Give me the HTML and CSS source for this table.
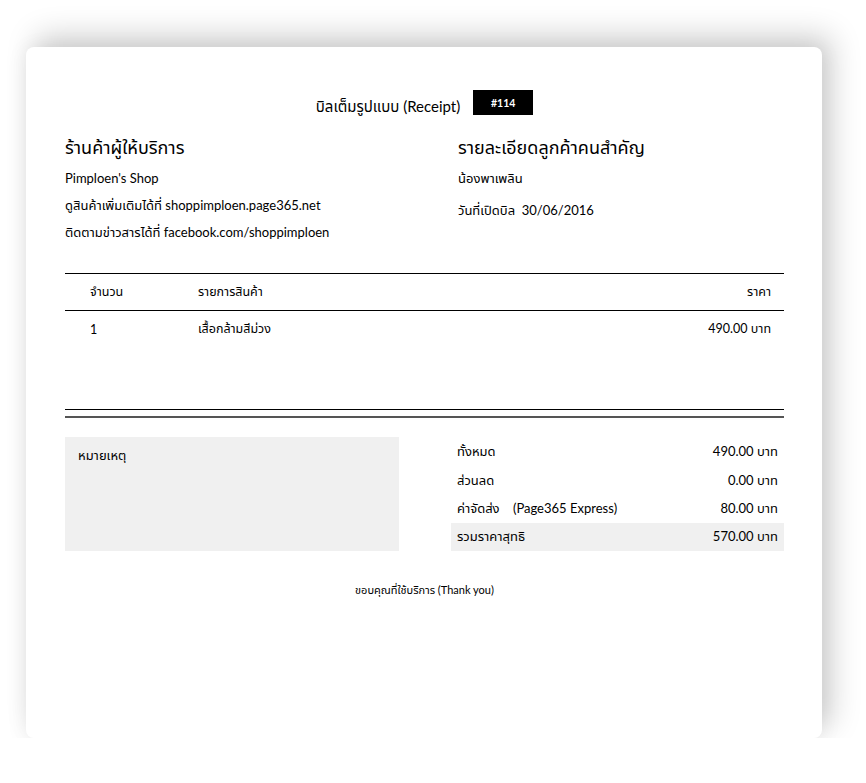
FILE: index.html
```html
<!DOCTYPE html>
<html lang="th">
<head>
<meta charset="utf-8">
<title>Receipt</title>
<link rel="stylesheet" href="styles.css">
</head>
<body>
<div class="card">
  <div class="title-row">
    <span class="title">บิลเต็มรูปแบบ (Receipt)</span>
    <span class="badge">#114</span>
  </div>

  <div class="info">
    <div class="col">
      <h2 class="heading">ร้านค้าผู้ให้บริการ</h2>
      <div class="line">Pimploen's Shop</div>
      <div class="line">ดูสินค้าเพิ่มเติมได้ที่ shoppimploen.page365.net</div>
      <div class="line">ติดตามข่าวสารได้ที่ facebook.com/shoppimploen</div>
    </div>
    <div class="col">
      <h2 class="heading">รายละเอียดลูกค้าคนสำคัญ</h2>
      <div class="line">น้องพาเพลิน</div>
      <div class="line date">วันที่เปิดบิล&nbsp; 30/06/2016</div>
    </div>
  </div>

  <div class="items">
    <div class="items-head">
      <span class="c-qty">จำนวน</span>
      <span class="c-name">รายการสินค้า</span>
      <span class="c-price">ราคา</span>
    </div>
    <div class="items-body">
      <div class="item-row">
        <span class="c-qty">1</span>
        <span class="c-name">เสื้อกล้ามสีม่วง</span>
        <span class="c-price">490.00 บาท</span>
      </div>
    </div>
    <div class="double-rule"></div>
  </div>

  <div class="summary">
    <div class="notes">หมายเหตุ</div>
    <div class="totals">
      <div class="t-row"><span>ทั้งหมด</span><span>490.00 บาท</span></div>
      <div class="t-row"><span>ส่วนลด</span><span>0.00 บาท</span></div>
      <div class="t-row"><span>ค่าจัดส่ง&nbsp;&nbsp;&nbsp; (Page365 Express)</span><span>80.00 บาท</span></div>
      <div class="t-row grand"><span>รวมราคาสุทธิ</span><span>570.00 บาท</span></div>
    </div>
  </div>

  <div class="thanks">ขอบคุณที่ใช้บริการ (Thank you)</div>
</div>
</body>
</html>
```

FILE: styles.css
```css
* { box-sizing: border-box; }
html, body { margin: 0; padding: 0; background: #fff; }
body {
  font-family: Lato, "Noto Sans Thai", "Noto Sans", "DejaVu Sans", sans-serif;
  color: #000;
  font-size: 13px;
  padding: 47px 0 0 26px;
}
.card {
  width: 796px;
  height: 691px;
  background: #fff;
  border-radius: 8px;
  box-shadow: 10px -12px 30px rgba(0,0,0,0.18), 0 2px 22px rgba(0,0,0,0.07);
  padding: 43px 38px 0 39px;
}
.title-row {
  display: flex;
  justify-content: center;
  align-items: flex-start;
  gap: 13px;
  height: 25px;
}
.title { font-size: 15px; line-height: 20px; padding-top: 6px; }
.badge {
  background: #000;
  color: #fff;
  font-weight: bold;
  font-size: 10.5px;
  width: 60px;
  height: 25px;
  display: flex;
  align-items: center;
  justify-content: center;
}
.info {
  display: grid;
  grid-template-columns: 393px 1fr;
  margin-top: 20px;
}
.heading {
  font-size: 18px;
  font-weight: normal;
  line-height: 24px;
  margin: 0 0 6px;
}
.line { line-height: 27px; }
.date { margin-top: 5px; }
.items { margin-top: 27px; }
.items-head, .item-row {
  display: flex;
  align-items: center;
  font-size: 12.5px;
}
.items-head {
  border-top: 1px solid #000;
  border-bottom: 1px solid #000;
  height: 38px;
}
.items-body { height: 98px; }
.item-row { height: 37px; }
.c-qty { width: 133px; padding-left: 25px; }
.c-name { flex: 1; }
.c-price { padding-right: 13px; text-align: right; }
.double-rule {
  height: 9px;
  border-top: 1px solid #000;
  border-bottom: 2px solid #555;
}
.summary {
  display: flex;
  justify-content: space-between;
  margin-top: 19px;
}
.notes {
  width: 334px;
  height: 114px;
  background: #f0f0f0;
  padding: 9px 13px;
  line-height: 18px;
}
.totals { width: 333px; }
.t-row {
  display: flex;
  justify-content: space-between;
  align-items: center;
  height: 28.5px;
  padding: 2px 6px 0;
}
.t-row.grand { background: #f0f0f0; padding-top: 0; }
.thanks {
  text-align: center;
  font-size: 11px;
  margin-top: 30px;
  line-height: 18px;
}
```
